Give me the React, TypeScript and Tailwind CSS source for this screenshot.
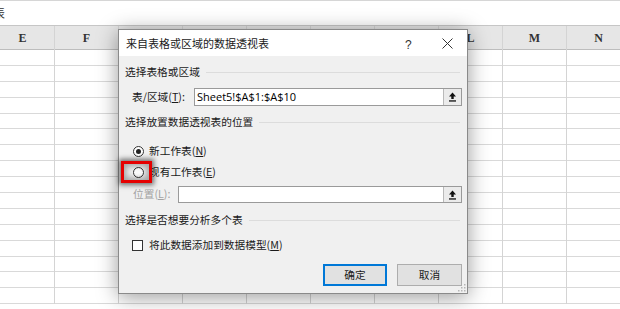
import React from 'react';

const cols = ['E', 'F', 'G', 'H', 'I', 'J', 'K', 'L', 'M', 'N'];
// columns fully hidden behind the dialog keep no visible label
const hidden = ['G', 'H', 'I', 'J', 'K'];
const rows = Array.from({ length: 16 }, (_, i) => i);

const cjk = "font-['Noto_Sans_CJK_SC','Noto_Sans',sans-serif]";

const UploadIcon = () => (
  <svg width="9" height="10" viewBox="0 0 9 10">
    <path d="M4.5 0.5 L1 4.5 H3.3 V7 H5.7 V4.5 H8 Z" fill="#111" />
    <rect x="1" y="8.3" width="7" height="1.3" fill="#111" />
  </svg>
);

const RefInput = ({ value }: { value?: string }) => (
  <div className="flex h-full flex-1 border border-[#9a9a9a] bg-white">
    <div className="flex flex-1 items-center pl-[2px] font-['Open_Sans',sans-serif] text-[11px] text-black">{value}</div>
    <div className="flex w-[18px] items-center justify-center border-l border-[#b9b9b9] bg-[#ebebeb]">
      <UploadIcon />
    </div>
  </div>
);

const Section = ({ title }: { title: string }) => (
  <div className="flex h-4 items-center gap-[6px] pr-[7px] pl-[6px]">
    <span className="whitespace-nowrap">{title}</span>
    <div className="h-px flex-1 bg-[#dcdcdc]" />
  </div>
);

const Radio = ({ checked }: { checked?: boolean }) => (
  <div className="flex h-[11px] w-[11px] items-center justify-center rounded-full border border-[#333] bg-white">
    {checked && <div className="h-[5px] w-[5px] rounded-full bg-[#222]" />}
  </div>
);

const Dialog = () => (
  <div className={`absolute top-[29px] left-[118px] flex h-[265px] w-[350px] flex-col border border-[#8a8a8a] bg-[#f0f0f0] text-[10.7px] text-[#1a1a1a] shadow-[0_3px_20px_rgba(0,0,0,0.4)] ${cjk}`}>
    {/* title bar */}
    <div className="relative flex h-[26px] items-center bg-white pl-[7px]">
      <span className="text-[11px]">来自表格或区域的数据透视表</span>
      <span className="absolute top-[6px] left-[286px] font-['Liberation_Sans',sans-serif] text-[12px] text-[#333]">?</span>
      <svg className="absolute top-[8px] left-[323px]" width="11" height="11" viewBox="0 0 11 11">
        <path d="M0.5 0.5 L10.5 10.5 M10.5 0.5 L0.5 10.5" stroke="#333" strokeWidth="1" />
      </svg>
    </div>

    <div className="mt-2">
      <Section title="选择表格或区域" />
    </div>

    <div className="mt-2 flex h-[18px] items-center pr-[5px] pl-[13px]">
      <span className="w-[62px] whitespace-nowrap">表/区域(<span className="underline">T</span>):</span>
      <RefInput value="Sheet5!$A$1:$A$10" />
    </div>

    <div className="mt-2">
      <Section title="选择放置数据透视表的位置" />
    </div>

    <div className="mt-[13px] flex h-4 items-center gap-[5px] pl-[14px]">
      <Radio checked />
      <span>新工作表(<span className="underline">N</span>)</span>
    </div>

    <div className="mt-[5px] flex h-4 items-center gap-[5px] pl-[14px]">
      <Radio />
      <span>现有工作表(<span className="underline">E</span>)</span>
    </div>

    <div className="mt-[6px] flex h-[17px] items-center pr-[5px] pl-[14px]">
      <span className="w-[45px] whitespace-nowrap text-[#a3a3a3]">位置(<span className="underline">L</span>):</span>
      <RefInput />
    </div>

    <div className="mt-[9px]">
      <Section title="选择是否想要分析多个表" />
    </div>

    <div className="mt-[9px] flex h-4 items-center gap-[6px] pl-[13px]">
      <div className="h-[11px] w-[11px] border border-[#333] bg-white" />
      <span>将此数据添加到数据模型(<span className="underline">M</span>)</span>
    </div>

    <div className="mt-[11px] flex justify-end gap-[10px] pr-[5px]">
      <button className="flex h-[22px] w-[64px] items-center justify-center border-2 border-[#0078d7] bg-[#e1e1e1]">确定</button>
      <button className="flex h-[22px] w-[65px] items-center justify-center border border-[#adadad] bg-[#e1e1e1]">取消</button>
    </div>

    {/* resize grip */}
    <svg className="absolute right-[1px] bottom-[1px]" width="8" height="8" viewBox="0 0 8 8">
      <rect x="6" y="0" width="1.5" height="1.5" fill="#b5b5b5" />
      <rect x="3" y="3" width="1.5" height="1.5" fill="#b5b5b5" />
      <rect x="6" y="3" width="1.5" height="1.5" fill="#b5b5b5" />
      <rect x="0" y="6" width="1.5" height="1.5" fill="#b5b5b5" />
      <rect x="3" y="6" width="1.5" height="1.5" fill="#b5b5b5" />
      <rect x="6" y="6" width="1.5" height="1.5" fill="#b5b5b5" />
    </svg>

    {/* highlight box */}
    <div className="absolute top-[131px] left-[2px] h-[22px] w-[31px] border-[3px] border-[#e50000] shadow-[0_0_5px_2px_rgba(0,0,0,0.55),inset_0_0_6px_2px_rgba(0,0,0,0.35)]" />
  </div>
);

export default function App() {
  return (
    <div className="relative h-[309px] w-[620px] overflow-hidden bg-white">
      {/* formula bar remnant */}
      <div className="flex h-[26px] items-center border-t border-b border-t-[#d6d6d6] border-b-[#c6c6c6] bg-white">
        <span className={`-ml-[7px] text-[12px] text-[#333] ${cjk}`}>表</span>
      </div>

      {/* sheet */}
      <div className="-ml-[9px] flex">
        {cols.map((c) => (
          <div key={c} className="w-16 shrink-0 border-r border-[#d4d4d4]">
            <div className="flex h-6 items-center justify-center border-b border-[#bdbdbd] bg-[#e6e6e6] font-['Liberation_Serif',serif] text-[12px] font-bold text-[#333]">
              {hidden.includes(c) ? '' : c}
            </div>
            {rows.map((r) => (
              <div key={r} className="h-[15.9px] border-b border-[#d9d9d9]" />
            ))}
          </div>
        ))}
      </div>

      <Dialog />
    </div>
  );
}
